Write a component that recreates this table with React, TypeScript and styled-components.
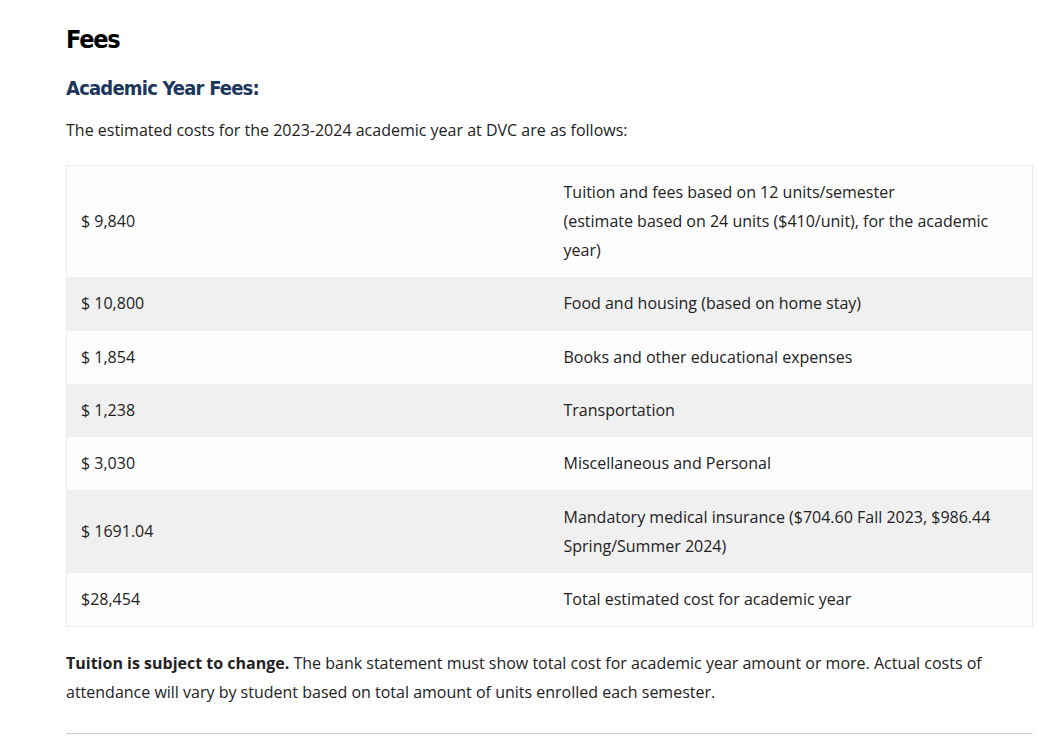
import React from "react";
import styled, { createGlobalStyle } from "styled-components";

const GlobalStyle = createGlobalStyle`
  body {
    margin: 0;
    background: #fff;
    font-family: "Open Sans", "Liberation Sans", Arial, sans-serif;
    color: #222;
  }
`;

const Page = styled.main`
  padding: 23px 6px 0 66px;
  width: 967px;
`;

const Title = styled.h2`
  font-family: "DejaVu Sans Condensed", "Liberation Sans", sans-serif;
  font-weight: bold;
  font-size: 25px;
  letter-spacing: -1.2px;
  color: #000;
  margin: 0 0 16px;
  line-height: 34px;
`;

const SubTitle = styled.h3`
  font-family: "DejaVu Sans Condensed", "Liberation Sans", sans-serif;
  font-weight: bold;
  font-size: 20px;
  letter-spacing: -0.8px;
  color: #1b365d;
  margin: 0 0 13px;
  line-height: 30px;
`;

const Text = styled.p<{ $gap?: number }>`
  font-size: 16px;
  line-height: 29px;
  margin: 0 0 ${(p) => p.$gap ?? 20}px;
`;

const Strong = styled.strong`
  font-weight: 700;
`;

const Table = styled.table`
  width: 100%;
  border-collapse: collapse;
  border: 1px solid #ececec;
  margin-bottom: 22px;
`;

const Row = styled.tr<{ $shade?: boolean }>`
  background: ${(p) => (p.$shade ? "#f0f0f0" : "#fdfdfd")};
`;

const Cell = styled.td`
  width: 50%;
  padding: 12.15px 14px;
  font-size: 16px;
  line-height: 29px;
  vertical-align: middle;
`;

const Rule = styled.hr`
  border: none;
  border-top: 1px solid #cfcfcf;
  margin: 0;
`;

const rows: [string, React.ReactNode][] = [
  [
    "$ 9,840",
    <>
      Tuition and fees based on 12 units/semester
      <br />
      (estimate based on 24 units ($410/unit), for the academic year)
    </>,
  ],
  ["$ 10,800", "Food and housing (based on home stay)"],
  ["$ 1,854", "Books and other educational expenses"],
  ["$ 1,238", "Transportation"],
  ["$ 3,030", "Miscellaneous and Personal"],
  [
    "$ 1691.04",
    "Mandatory medical insurance ($704.60 Fall 2023, $986.44 Spring/Summer 2024)",
  ],
  ["$28,454", "Total estimated cost for academic year"],
];

export default function App() {
  return (
    <>
      <GlobalStyle />
      <Page>
        <Title>Fees</Title>
        <SubTitle>Academic Year Fees:</SubTitle>
        <Text>
          The estimated costs for the 2023-2024 academic year at DVC are as
          follows:
        </Text>
        <Table>
          <tbody>
            {rows.map(([amount, label], i) => (
              <Row key={i} $shade={i % 2 === 1}>
                <Cell>{amount}</Cell>
                <Cell>{label}</Cell>
              </Row>
            ))}
          </tbody>
        </Table>
        <Text $gap={26}>
          <Strong>Tuition is subject to change.</Strong> The bank statement
          must show total cost for academic year amount or more. Actual costs
          of attendance will vary by student based on total amount of units
          enrolled each semester.
        </Text>
        <Rule />
      </Page>
    </>
  );
}
